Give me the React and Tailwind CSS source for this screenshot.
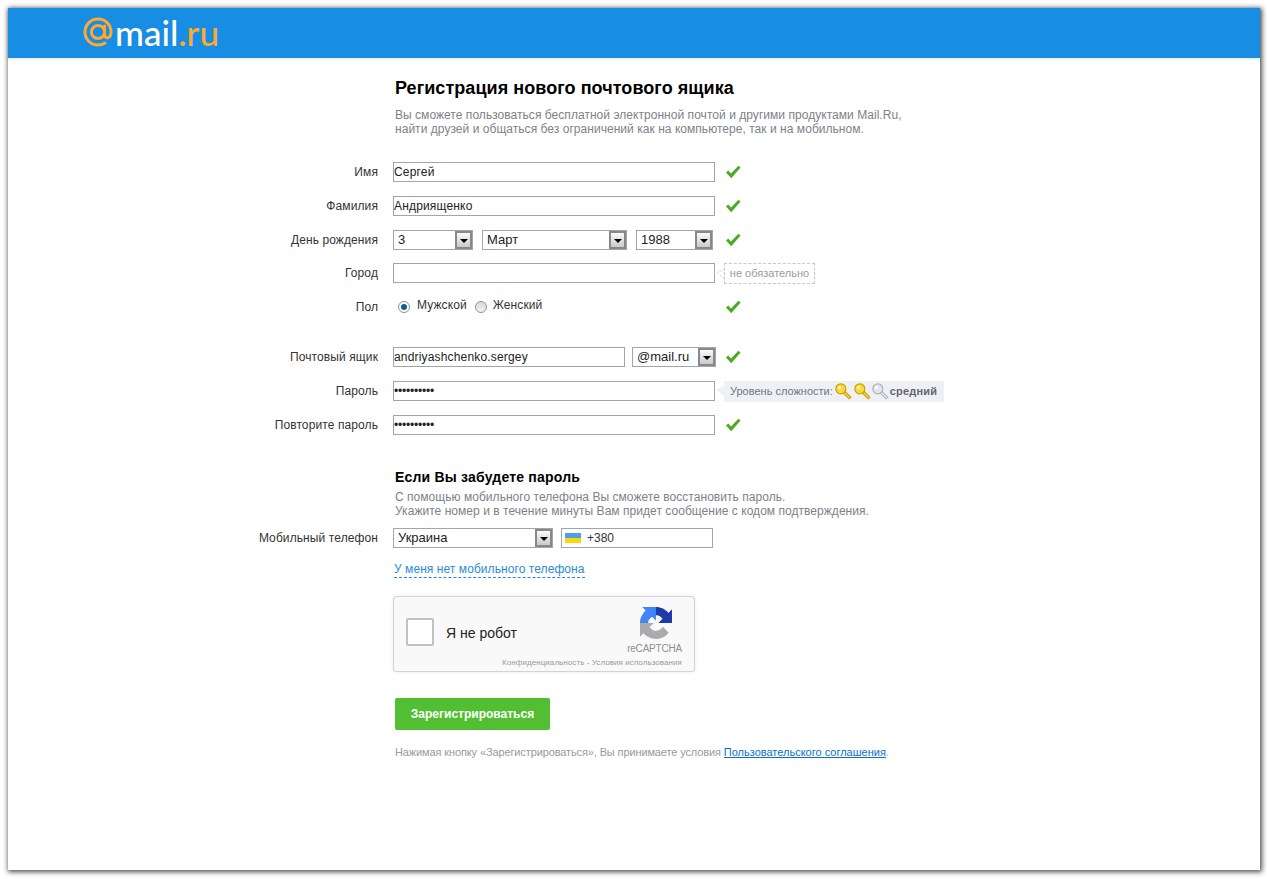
import React from "react";

const Check = () => (
  <svg width="16" height="14" viewBox="0 0 16 14" className="shrink-0">
    <path d="M1 7.5 L3.2 5.6 L6 8.6 L13.4 0.8 L15.6 2.4 L6.2 13.2 Z" fill="#4dab23" />
  </svg>
);

const Arrow = () => (
  <span className="w-[17px] h-[18px] border-2 border-[#86898c] bg-gradient-to-b from-[#fafafa] to-[#cacaca] flex items-center justify-center shrink-0">
    <span className="w-0 h-0 border-l-[4px] border-r-[4px] border-t-[4px] border-l-transparent border-r-transparent border-t-black mt-[2px]" />
  </span>
);

const Select = ({ w, value, cls = "" }) => (
  <div className={`${w} h-[20px] shrink-0 border border-[#a3a6a8] bg-white flex items-center justify-between ${cls}`}>
    <span className="pl-[4px] text-[13px] text-[#222] leading-[18px]">{value}</span>
    <Arrow />
  </div>
);

const Input = ({ w = "w-[322px]", value = "", password = false }) => (
  <div className={`${w} h-[20px] shrink-0 border border-[#a0a5a8] bg-white flex items-center text-[12px] tracking-[0.17px] text-[#222] overflow-hidden`}>
    {password ? <span className="text-[12px] tracking-[-0.2px] leading-none">••••••••••</span> : value}
  </div>
);

const Row = ({ label, children, check = true, mt = "mt-[14px]" }) => (
  <div className={`flex items-center h-[20px] ${mt}`}>
    <div className="w-[370px] shrink-0 text-right text-[12px] tracking-[0.1px] text-[#333] mr-[15px] leading-[14px] -mt-[1px]">{label}</div>
    {check ? (
      <>
        <div className="w-[322px] shrink-0 flex items-center">{children}</div>
        <span className="ml-[10px] flex"><Check /></span>
      </>
    ) : (
      children
    )}
  </div>
);

const Key = ({ gold = true }) => (
  <svg width="17" height="17" viewBox="0 0 17 17" className="shrink-0">
    <path d="M8.5 8.5 L15.4 15.4" stroke={gold ? "#c99a00" : "#aeb2b6"} strokeWidth="3.4" fill="none" />
    <path d="M9.5 9.5 L14.8 14.8" stroke={gold ? "#f7d43a" : "#e6e8ea"} strokeWidth="1.4" fill="none" />
    <circle cx="5.8" cy="5.8" r="5" fill={gold ? "#f9d93c" : "#e4e6e8"} stroke={gold ? "#cf9f0a" : "#b0b4b8"} strokeWidth="1.2" />
    <circle cx="4.4" cy="4.4" r="1.5" fill={gold ? "#fff6c0" : "#ffffff"} />
  </svg>
);

const Radio = ({ on }) => (
  <span className={`w-[12px] h-[12px] rounded-full border border-[#8d9196] flex items-center justify-center shrink-0 ${on ? "bg-white" : "bg-gradient-to-b from-[#d8d8d8] to-[#f2f2f2]"}`}>
    {on && <span className="w-[6px] h-[6px] rounded-full bg-[#0f5f8f]" />}
  </span>
);

const Logo = () => (
  <div className="flex items-baseline ml-[75px] h-[30px] leading-[30px] font-['Lato',sans-serif] text-[35px] font-medium">
    <svg width="30" height="30" viewBox="0 0 30 30" className="self-center mr-[2px] shrink-0">
      <circle cx="15" cy="15" r="6.6" fill="none" stroke="#ffa930" strokeWidth="3" />
      <path d="M21.6 9 V17.5 C21.6 22.5 28 22 28 15 C28 7.5 22 2 15 2 C7.5 2 2 8 2 15 C2 22.5 8 28 15 28 C18 28 20 27.4 22 26" fill="none" stroke="#ffa930" strokeWidth="3" strokeLinecap="round" />
    </svg>
    <span className="text-white">mail</span>
    <span className="text-[#ffa930]">.ru</span>
  </div>
);

const Recaptcha = () => (
  <div className="relative ml-[385px] mt-[21px] w-[302px] h-[76px] bg-[#f9f9f9] border border-[#d3d3d3] rounded-[3px] shadow-[0_0_4px_rgba(0,0,0,0.08)] flex items-center">
    <span className="ml-[12px] -mt-[4px] w-[28px] h-[28px] bg-white border-2 border-[#c1c1c1] rounded-[2px] shrink-0" />
    <span className="ml-[12px] -mt-[2px] text-[14px] text-[#222]">Я не робот</span>
    <div className="absolute right-[12px] top-[10px] flex flex-col items-end">
      <svg width="32" height="32" viewBox="0 0 64 64" className="mr-[10px]">
        <path d="M64 31.955l-.033-1.37V4.687l-7.16 7.16C50.948 4.674 42.033.093 32.05.093c-10.4 0-19.622 4.96-25.458 12.64l11.736 11.86a15.55 15.55 0 0 1 4.754-5.334c2.05-1.6 4.952-2.906 8.968-2.906.485 0 .86.057 1.135.163 4.976.393 9.288 3.14 11.828 7.124l-8.307 8.307 26.295.008" fill="#1c3aa9" />
        <path d="M31.862.094l-1.37.033H4.594l7.16 7.16C4.58 13.147 0 22.06 0 32.046c0 10.4 4.96 19.622 12.64 25.458L24.5 45.768a15.55 15.55 0 0 1-5.334-4.754c-1.6-2.05-2.906-4.952-2.906-8.968 0-.485.057-.86.163-1.135.393-4.976 3.14-9.288 7.124-11.828l8.307 8.307.008-26.295" fill="#4285f4" />
        <path d="M.001 32.045l.033 1.37v25.898l7.16-7.16c5.86 7.173 14.774 11.754 24.76 11.754 10.4 0 19.622-4.96 25.458-12.64l-11.736-11.86a15.55 15.55 0 0 1-4.754 5.334c-2.05 1.6-4.952 2.906-8.968 2.906-.485 0-.86-.057-1.135-.163-4.976-.393-9.288-3.14-11.828-7.124l8.307-8.307-26.295-.008" fill="#ababab" />
      </svg>
      <span className="text-[10px] tracking-[-0.2px] leading-[12px] text-[#8f8f8f] mt-[4px]">reCAPTCHA</span>
    </div>
    <span className="absolute right-[12px] bottom-[3px] text-[8px] tracking-[0.07px] leading-[10px] text-[#9b9b9b]">Конфиденциальность - Условия использования</span>
  </div>
);

export default function App() {
  return (
    <div className="h-[879px] bg-white pt-[8px] px-[8px] font-['Liberation_Sans',Arial,sans-serif] overflow-hidden">
      <div className="h-[862px] bg-white shadow-[1px_1px_5px_1px_rgba(0,0,0,0.7)]">
        <header className="h-[50px] pt-[9px] bg-[#178de4] shadow-[0_1px_3px_rgba(0,0,0,0.12)]">
          <Logo />
        </header>

        <main>
          <h1 className="ml-[387px] pt-[20px] text-[18px] tracking-[0.06px] leading-[20px] font-bold text-black">Регистрация нового почтового ящика</h1>
          <p className="ml-[387px] mt-[10px] text-[12px] tracking-[0.04px] leading-[14px] text-[#7d8288]">
            Вы сможете пользоваться бесплатной электронной почтой и другими продуктами Mail.Ru,
            <br />
            найти друзей и общаться без ограничений как на компьютере, так и на мобильном.
          </p>

          <Row label="Имя" mt="mt-[26px]"><Input value="Сергей" /></Row>
          <Row label="Фамилия"><Input value="Андриященко" /></Row>
          <Row label="День рождения">
            <Select w="w-[80px]" value="3" />
            <Select w="w-[145px]" value="Март" cls="ml-[9px]" />
            <Select w="w-[77px]" value="1988" cls="ml-[9px]" />
          </Row>
          <Row label="Город" check={false} mt="mt-[13px]">
            <Input />
            <div className="relative ml-[9px] h-[21px] w-[91px] border border-dashed border-[#c9c9c9] text-[11px] text-[#9b9b9b] flex items-center justify-center">
              не обязательно
              <svg width="9" height="12" viewBox="0 0 9 12" className="absolute -left-[9px] top-[4px]">
                <path d="M9 1 L1 4.5 L9 11" fill="none" stroke="#c9c9c9" strokeDasharray="2 2" />
              </svg>
            </div>
          </Row>
          <Row label="Пол" mt="mt-[14px]">
            <div className="w-[322px] flex items-center text-[12px] tracking-[0.1px] text-[#333] pl-[5px] h-[20px]">
              <Radio on />
              <span className="ml-[7px] -mt-[4px]">Мужской</span>
              <span className="ml-[8px]"><Radio /></span>
              <span className="ml-[6px] -mt-[4px]">Женский</span>
            </div>
          </Row>

          <Row label="Почтовый ящик" mt="mt-[30px]">
            <Input w="w-[232px]" value="andriyashchenko.sergey" />
            <Select w="w-[84px]" value="@mail.ru" cls="ml-[7px]" />
          </Row>
          <Row label="Пароль" check={false}>
            <Input password />
            <div className="relative ml-[9px] h-[21px] w-[220px] bg-[#eef0f5] text-[11px] text-[#6f7680] flex items-center pl-[6px]">
              <span className="absolute -left-[8px] top-[5px] w-0 h-0 border-t-[4px] border-b-[6px] border-r-[8px] border-t-transparent border-b-transparent border-r-[#eef0f5]" />
              <span className="mr-[2px]">Уровень сложности:</span>
              <Key /><span className="w-[2px]" /><Key /><span className="w-[1px]" /><Key gold={false} />
              <span className="ml-[1px] font-bold tracking-[0.2px] text-[#5f666e]">средний</span>
            </div>
          </Row>
          <Row label="Повторите пароль"><Input password /></Row>

          <h2 className="ml-[387px] mt-[35px] text-[14px] tracking-[0.2px] leading-[14px] font-bold text-black">Если Вы забудете пароль</h2>
          <p className="ml-[387px] mt-[6px] text-[12px] tracking-[0.04px] leading-[14px] text-[#7d8288]">
            С помощью мобильного телефона Вы сможете восстановить пароль.
            <br />
            Укажите номер и в течение минуты Вам придет сообщение с кодом подтверждения.
          </p>

          <Row label="Мобильный телефон" check={false} mt="mt-[10px]">
            <Select w="w-[160px]" value="Украина" />
            <div className="ml-[8px] w-[152px] h-[20px] border border-[#a0a5a8] bg-white flex items-center pl-[3px] text-[12px] text-[#333]">
              <span className="w-[16px] h-[10px] bg-gradient-to-b from-[#4f9fe8] via-[#4f9fe8] via-50% to-[#f5d90a] to-50% shrink-0" />
              <span className="ml-[6px]">+380</span>
            </div>
          </Row>

          <div className="ml-[386px] mt-[13px] h-[14px] leading-[14px]">
            <span className="text-[12px] tracking-[0.07px] text-[#2a8bd8] border-b border-dashed border-[#168de2] pb-[1px]">У меня нет мобильного телефона</span>
          </div>

          <Recaptcha />

          <button className="block ml-[387px] mt-[26px] w-[155px] h-[32px] bg-[#52bf33] rounded-[2px] text-white text-[12px] font-bold">Зарегистрироваться</button>

          <p className="ml-[387px] mt-[15px] text-[11px] leading-[14px] text-[#9a9a9a]">
            <span className="tracking-[-0.12px]">Нажимая кнопку «Зарегистрироваться», Вы принимаете условия </span>
            <a className="text-[#0a70c8] underline">Пользовательского соглашения</a>.
          </p>
        </main>
      </div>
    </div>
  );
}
